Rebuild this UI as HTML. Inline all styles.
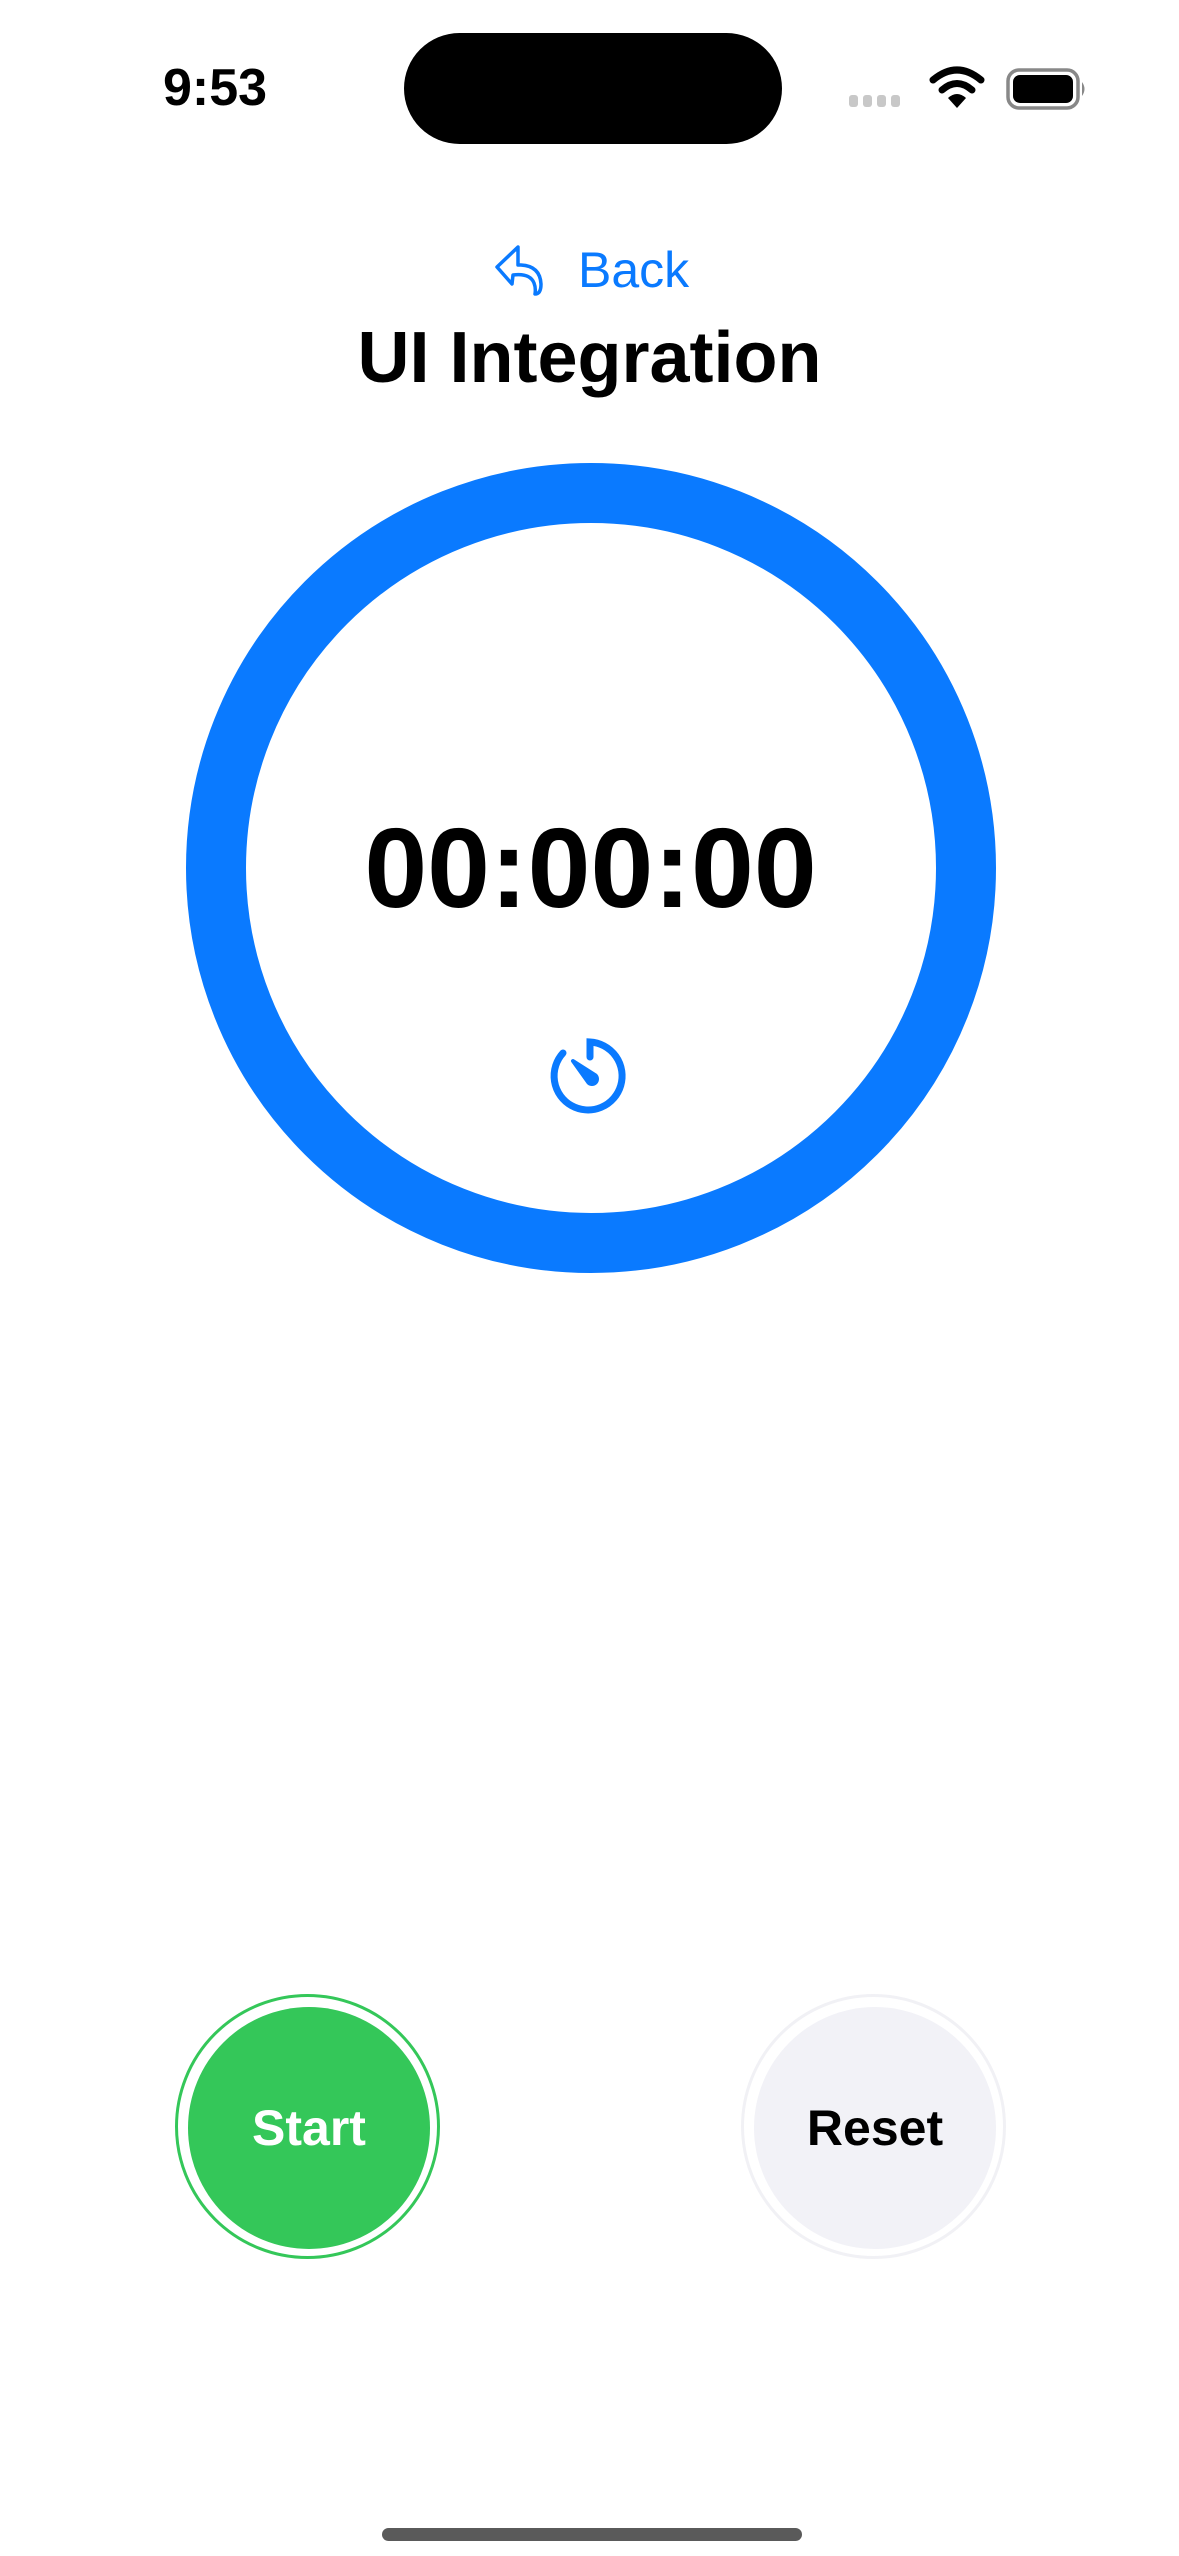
<!DOCTYPE html>
<html><head><meta charset="utf-8"><style>
html,body{margin:0;padding:0;background:#fff;}
body{width:1179px;height:2556px;position:relative;overflow:hidden;font-family:"Liberation Sans",sans-serif;}
.a{position:absolute;}
</style></head><body>
<div class="a" style="left:150px;top:58px;width:130px;text-align:center;font-size:52px;font-weight:bold;color:#000;line-height:60px;">9:53</div>
<div class="a" style="left:404px;top:33px;width:378px;height:111px;border-radius:56px;background:#000;"></div>
<svg class="a" style="left:845px;top:60px" width="250" height="60" viewBox="0 0 250 60">
<g fill="#c8c8c8"><rect x="4" y="35" width="9" height="12" rx="3"/><rect x="18" y="35" width="9" height="12" rx="3"/><rect x="32" y="35" width="9" height="12" rx="3"/><rect x="46" y="35" width="9" height="12" rx="3"/></g>
<g fill="none" stroke="#000" stroke-width="7" stroke-linecap="round"><path d="M88 20 Q112 0 136 20"/><path d="M97 30 Q112 17 127 30"/></g>
<path d="M103 38 Q112 30 121 38 L112 48 Z" fill="#000"/>
<rect x="163" y="10" width="70" height="38" rx="11" fill="none" stroke="#888" stroke-width="3.5"/>
<rect x="168" y="15" width="60" height="28" rx="7" fill="#000"/>
<path d="M237 22 Q242 29 237 36 Z" fill="#888"/>
</svg>
<svg class="a" style="left:490px;top:242px" width="64" height="56" viewBox="0 0 64 56">
<path d="M28 5 L7 25 L22 42 L23 33 Q40 31 44 41 Q46 46 45 52 Q51 52 51 42 Q50 24 31 23 L28 23 Z" fill="none" stroke="#0a7aff" stroke-width="3.5" stroke-linejoin="round"/>
</svg>
<div class="a" style="left:578px;top:238px;font-size:50px;color:#0a7aff;line-height:64px;">Back</div>
<div class="a" style="left:0;top:308px;width:1179px;text-align:center;font-size:72px;font-weight:bold;color:#000;line-height:100px;">UI Integration</div>
<svg class="a" style="left:0;top:0" width="1179" height="1400">
<circle cx="591" cy="868" r="375" fill="none" stroke="#0a7aff" stroke-width="60"/>
<g fill="none" stroke="#0a7aff" stroke-width="7" stroke-linecap="round">
<path d="M563 1053 A34 34 0 1 0 590 1042 L590 1057"/>
</g>
<path d="M573 1061 L595 1075 A5 5 0 1 1 588 1082 Z" fill="#0a7aff" stroke="#0a7aff" stroke-width="4" stroke-linejoin="round"/>
</svg>
<div class="a" style="left:0;top:798px;width:1181px;text-align:center;font-size:113px;font-weight:bold;color:#000;line-height:140px;">00:00:00</div>
<div class="a" style="left:175px;top:1994px;width:265px;height:265px;border-radius:50%;border:3px solid #34c759;box-sizing:border-box;"></div>
<div class="a" style="left:188px;top:2007px;width:242px;height:242px;border-radius:50%;background:#34c759;color:#fff;font-size:50px;font-weight:bold;text-align:center;line-height:242px;">Start</div>
<div class="a" style="left:741px;top:1994px;width:265px;height:265px;border-radius:50%;border:3px solid #f1f1f5;box-sizing:border-box;"></div>
<div class="a" style="left:754px;top:2007px;width:242px;height:242px;border-radius:50%;background:#f2f2f7;color:#000;font-size:50px;font-weight:bold;text-align:center;line-height:242px;">Reset</div>
<div class="a" style="left:382px;top:2528px;width:420px;height:13px;border-radius:7px;background:#5a5a5a;"></div>
</body></html>
